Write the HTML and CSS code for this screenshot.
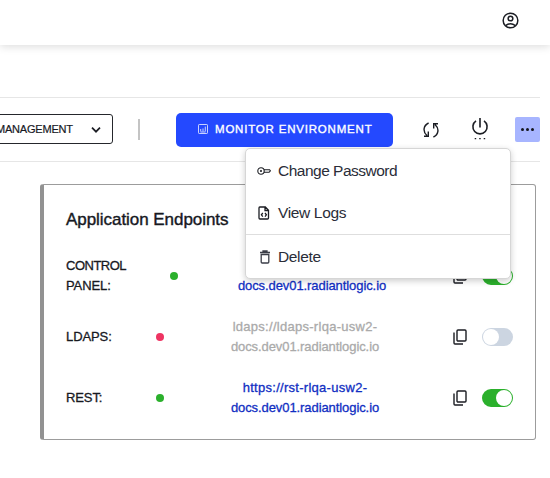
FILE: index.html
```html
<!DOCTYPE html>
<html lang="en">
<head>
<meta charset="utf-8">
<title>Environment</title>
<link rel="stylesheet" href="styles.css">
</head>
<body>
<svg width="0" height="0" class="defs"><symbol id="copy" viewBox="0 0 14 16"><rect x="4" y="1" width="9" height="11" rx="1"/><path d="M1 3.5V14q0 1 1 1h8"/></symbol></svg>
<header class="topbar">
  <svg class="user" viewBox="0 0 16 16"><circle cx="8" cy="8" r="6.9"/><circle cx="8" cy="6.1" r="2.2"/><path d="M3.4 12.8q4.6-3.5 9.2 0"/></svg>
</header>
<section class="toolbar">
  <button class="select"><span class="select-text">MANAGEMENT</span><svg class="chevron" viewBox="0 0 10 6"><path d="M1 .7l4 4 4-4"/></svg></button>
  <i class="divider"></i>
  <button class="primary"><svg class="chart" viewBox="0 0 10 10"><rect x=".5" y=".5" width="9" height="9" rx=".7"/><path d="M2.7 7.5V5M5 7.5V4.5M7.3 7.5V2.6M2.5 8h5"/></svg><span class="primary-text">MONITOR ENVIRONMENT</span></button>
  <svg class="sync" viewBox="0 0 16 16"><path d="M5.6 1C.3 3.5-.5 9.5 4 13.6M5.3 9.6v4.7H1M10.4 15c5.3-2.5 6.1-8.5 1.6-12.6M10.7 6.4V1.7H15"/></svg>
  <svg class="power" viewBox="0 0 18 22"><path d="M9 0v9.5M5 2.9a7.1 7.1 0 1 0 8 0"/><path class="dots" d="M3.7 20.6h1.5M8.2 20.6h1.5M12.7 20.6h1.5"/></svg>
  <div class="more-wrap">
    <button class="more"><i></i><i></i><i></i></button>
    <div class="menu">
      <div class="item password"><svg class="key" viewBox="0 0 14 8"><circle cx="4" cy="4" r="3.2"/><circle cx="4" cy="4" r=".5"/><path d="M7 2.8h5.6l.8 1.1-1.3 1.4H7"/></svg><span class="t1">Change Password</span></div>
      <div class="item logs"><svg class="file" viewBox="0 0 12 14"><path d="M1.8 1h5.5l3.2 3.2V12q0 1-1 1H2q-1 0-1-1V2q0-1 .8-1zM7 1v3.5h3.5"/><path d="M4.8 7L3.4 8.8l1.4 1.8M7 7l1.4 1.8L7 10.6"/></svg><span class="t2">View Logs</span></div>
      <div class="item delete"><svg class="trash" viewBox="0 0 12 14"><path d="M1 2.5h10M4 2.5V1h4v1.5M2.2 4.5V12q0 1 1 1h5.6q1 0 1-1V4.5z"/></svg><span class="t3">Delete</span></div>
    </div>
  </div>
</section>
<main class="card">
  <h2><span class="title">Application Endpoints</span></h2>
  <div class="row shifted">
    <div class="label"><span class="l1">CONTROL</span><br><span class="l2">PANEL:</span></div><i class="dot"></i>
    <a class="link"><br><span class="u2">docs.dev01.radiantlogic.io</span></a>
    <svg class="copy"><use href="#copy"/></svg><i class="toggle on"></i>
  </div>
  <div class="row">
    <div class="label"><span class="l3">LDAPS:</span></div><i class="dot down"></i>
    <a class="link off"><span class="u1">ldaps://ldaps-rlqa-usw2-</span><br><span class="u2">docs.dev01.radiantlogic.io</span></a>
    <svg class="copy"><use href="#copy"/></svg><i class="toggle"></i>
  </div>
  <div class="row">
    <div class="label"><span class="l4">REST:</span></div><i class="dot"></i>
    <a class="link"><span class="u1">https://rst-rlqa-usw2-</span><br><span class="u2">docs.dev01.radiantlogic.io</span></a>
    <svg class="copy"><use href="#copy"/></svg><i class="toggle on"></i>
  </div>
</main>
</body>
</html>
```
FILE: styles.css
```css
* { box-sizing: border-box; }
body { margin: 0; width: 550px; height: 478px; overflow: hidden; background: #fff; color: #17191f; font-family: "Liberation Sans", Arial, sans-serif; }
button { font: inherit; padding: 0; }
svg { display: block; flex: none; fill: none; stroke: #1b1d23; stroke-width: 1.4; }
span { white-space: nowrap; }
.defs { position: absolute; }
.topbar { height: 45px; padding: 12px 31px 0 0; display: flex; justify-content: flex-end; box-shadow: 0 2px 8px rgba(0,0,0,.13); }
.user { width: 17px; height: 17px; }
.toolbar { margin-top: 52px; height: 65px; width: 540px; display: flex; align-items: center; border-top: 1px solid #e6e6e6; border-bottom: 1px solid #e6e6e6; }
.select { width: 123px; height: 30px; margin: -1px 0 0 -10px; padding: 0 11px 1px 5px; display: flex; align-items: center; justify-content: space-between; flex: none; border: 1px solid #25272c; border-radius: 3px; background: #fff; color: #17191f; font-size: 11px; -webkit-text-stroke: .2px; }
.select-text { letter-spacing: -.2px; }
.chevron { width: 10px; height: 6px; margin-top: 2px; stroke-width: 1.7; }
.divider { width: 2px; height: 21px; margin: 0 36px 0 25px; background: #c4c4c4; flex: none; }
.primary { width: 217px; height: 34px; display: flex; align-items: center; flex: none; padding: 0 0 1px 22px; gap: 7px; border: 0; border-radius: 5px; background: #2449ff; color: #fff; font-size: 11.5px; letter-spacing: .8px; -webkit-text-stroke: .35px; }
.chart { width: 10px; height: 10px; stroke: #dbe1ff; stroke-width: .9; }
.sync { width: 16px; height: 16px; margin-left: 30px; }
.power { width: 18px; height: 22px; margin: -1px 0 0 32px; stroke-width: 1.6; }
.power .dots { stroke-width: 1.4; }
.more-wrap { position: relative; margin-left: auto; z-index: 2; }
.more { width: 25px; height: 25px; display: flex; align-items: center; justify-content: center; gap: 2px; border: 0; border-radius: 2px; background: #a7b5ff; }
.more i { width: 3px; height: 3px; border-radius: 50%; background: #14161d; }
.menu { position: absolute; top: 31px; right: 29px; width: 266px; height: 131px; background: #fff; border: 1px solid #d6d6d6; border-radius: 5px; box-shadow: 0 2px 6px rgba(0,0,0,.2); color: #2a2d38; font-size: 15.5px; }
.item { height: 43px; padding: 0 0 0 11px; display: flex; align-items: center; }
.item svg { stroke-width: 1.3; }
.item .key { width: 14px; height: 8px; margin-right: 7px; stroke-width: 1.1; }
.file { width: 12px; height: 14px; margin: 0 8px 0 1px; }
.trash { width: 12px; height: 14px; margin: 0 7px 0 2px; stroke: #3b3e48; }
.logs { height: 42px; }
.delete { border-top: 1px solid #dedede; height: 45px; }
.t1 { letter-spacing: -.5px; }
.t2, .t3 { letter-spacing: -.35px; }
.card { width: 496px; height: 256px; margin: 22px 0 0 40px; padding: 25px 22px 0 22px; border: 1px solid #9c9c9c; border-left: 4px solid #929292; border-radius: 3px; }
h2 { margin: 0 0 26px; font-size: 17px; line-height: 20px; height: 20px; font-weight: 400; -webkit-text-stroke: .4px; }
.title { letter-spacing: -.05px; }
.row { height: 39px; margin-bottom: 22px; display: flex; align-items: center; font-size: 13px; line-height: 19.5px; -webkit-text-stroke: .3px; }
.label { width: 90px; flex: none; letter-spacing: -.1px; }
.l1 { letter-spacing: -.5px; }
.dot { width: 8px; height: 8px; border-radius: 50%; background: #2bb02c; flex: none; }
.dot.down { background: #ee3462; }
.link { width: 170px; margin-left: 56px; flex: none; text-align: center; color: #102ec2; }
.link.off { color: #aaa; }
.u1 { letter-spacing: .28px; }
.u2 { letter-spacing: -.08px; }
.shifted .label { width: 104px; }
.shifted .link { margin-left: 49px; }
.shifted .copy { margin-left: 56px; }
.copy { width: 14px; height: 16px; margin-left: 63px; }
.toggle { width: 31px; height: 18px; margin-left: 15px; border-radius: 9px; background: #ccd5e1; padding: 1px; display: flex; flex: none; }
.toggle::before { content: ""; width: 16px; height: 16px; border-radius: 50%; background: #fff; }
.toggle.on { background: #2bb02c; justify-content: flex-end; }
```
